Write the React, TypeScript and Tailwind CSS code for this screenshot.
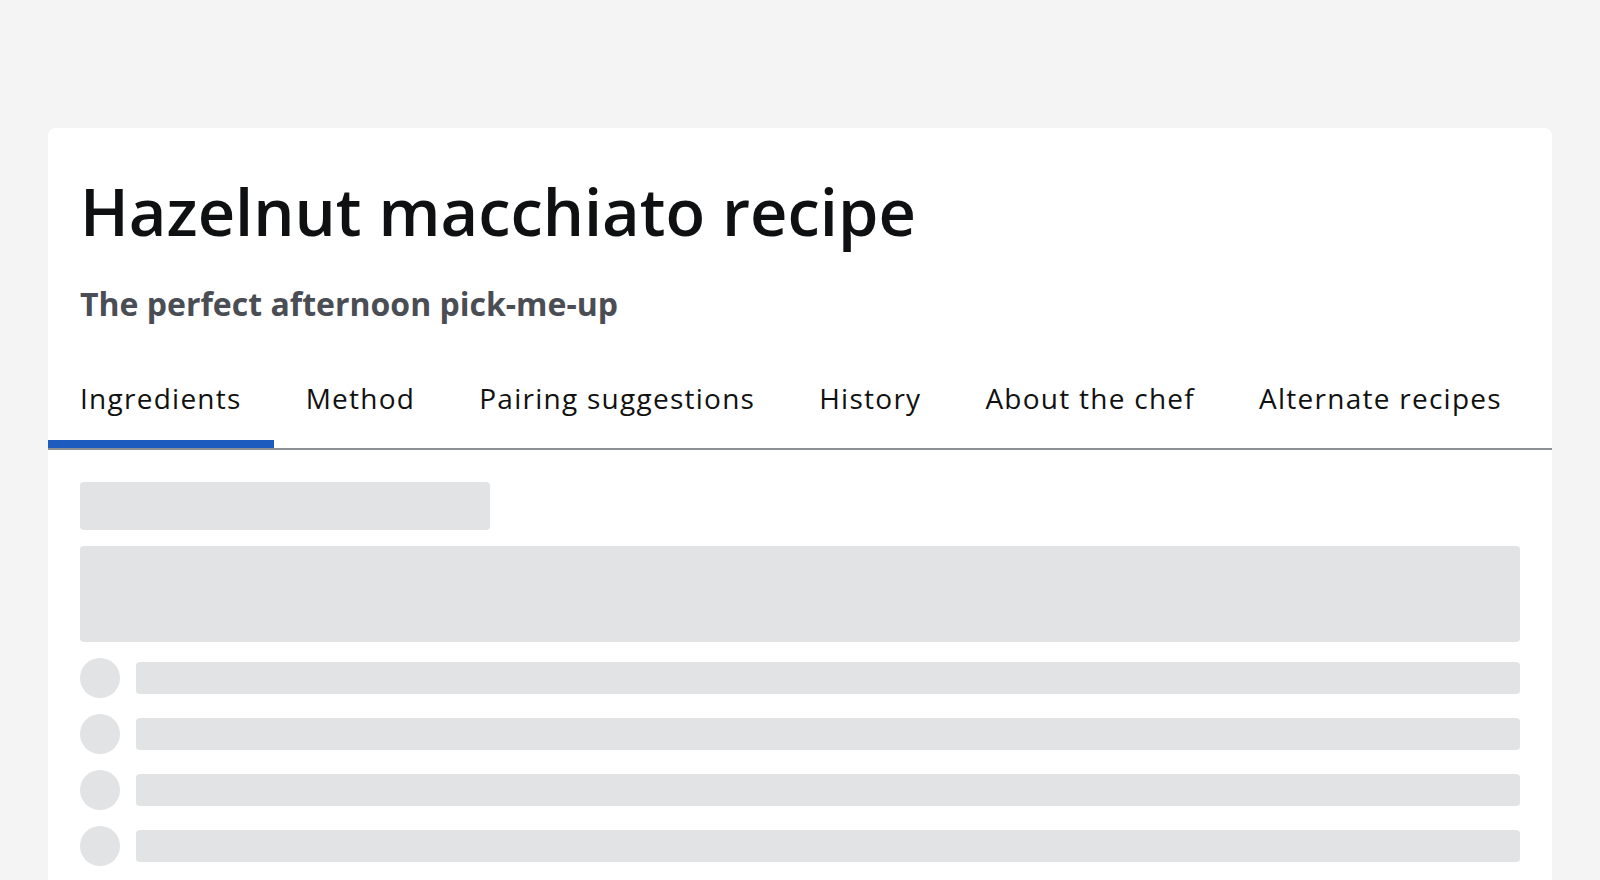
import React from "react";

const tabs = ["Ingredients", "Method", "Pairing suggestions", "History", "About the chef", "Alternate recipes"];

export default function App() {
  return (
    <div className="min-h-screen bg-[#f4f4f4] px-12 pt-32" style={{ fontFamily: '"Open Sans", "Noto Sans", sans-serif' }}>
      <div className="rounded-t-lg bg-white pb-8">
        <div className="px-8 pt-[43px]">
          <h1 className="text-[65px] leading-[80px] font-semibold text-[#0f1011]">Hazelnut macchiato recipe</h1>
          <p className="mt-[35px] text-[32px] leading-[36px] font-bold text-[#4a4d54]">The perfect afternoon pick-me-up</p>
        </div>
        <div className="mt-[35px] flex border-b-2 border-[#8c8f94]" role="tablist">
          {tabs.map((t, i) => (
            <button
              key={t}
              role="tab"
              className={
                i === 0
                  ? "px-8 pt-[23px] pb-[24px] border-b-8 border-[#1d5bbf] text-[28px] leading-[36px] font-medium text-[#111] tracking-[1.26px]"
                  : "px-8 pt-[23px] pb-[24px] border-b-8 border-transparent text-[28px] leading-[36px] font-medium text-[#111] tracking-[1.26px]"
              }
            >
              {t}
            </button>
          ))}
        </div>
        <div className="flex flex-col gap-4 px-8 pt-8">
          <div className="h-12 w-[410px] rounded bg-[#e2e3e5]" />
          <div className="h-24 w-full rounded bg-[#e2e3e5]" />
          {[0, 1, 2, 3].map((r) => (
            <div key={r} className="flex items-center gap-4">
              <div className="h-10 w-10 shrink-0 rounded-full bg-[#e2e3e5]" />
              <div className="h-8 flex-1 rounded bg-[#e2e3e5]" />
            </div>
          ))}
        </div>
      </div>
    </div>
  );
}
